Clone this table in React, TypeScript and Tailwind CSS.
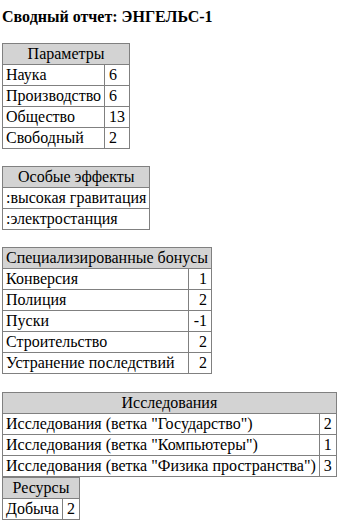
import React from "react";

type Row = [string, string];

const params: Row[] = [
  ["Наука", "6"],
  ["Производство", "6"],
  ["Общество", "13"],
  ["Свободный", "2"],
];

const effects = [":высокая гравитация", ":электростанция"];

const bonuses: Row[] = [
  ["Конверсия", "1"],
  ["Полиция", "2"],
  ["Пуски", "-1"],
  ["Строительство", "2"],
  ["Устранение последствий", "2"],
];

const research: Row[] = [
  ['Исследования (ветка "Государство")', "2"],
  ['Исследования (ветка "Компьютеры")', "1"],
  ['Исследования (ветка "Физика пространства")', "3"],
];

const resources: Row[] = [["Добыча", "2"]];

const cell = "border border-[#808080] py-[1px] whitespace-nowrap";

function StatTable({ title, rows, align = "text-right" }: { title: string; rows: Row[]; align?: string }) {
  return (
    <table className="border-collapse border border-[#808080]">
      <thead>
        <tr>
          <th colSpan={2} className={`${cell} px-[3px] bg-[#d3d3d3] font-normal text-center`}>
            {title}
          </th>
        </tr>
      </thead>
      <tbody>
        {rows.map(([name, value]) => (
          <tr key={name}>
            <td className={`${cell} px-[3px] text-left`}>{name}</td>
            <td className={`${cell} px-[4px] ${align}`}>{value}</td>
          </tr>
        ))}
      </tbody>
    </table>
  );
}

export default function App() {
  return (
    <div className="min-h-screen bg-white px-[2px] pt-[8px] font-['Liberation_Serif','Times_New_Roman',serif] text-[16px] leading-[18px] text-black">
      <div className="mb-[17px] font-bold">Сводный отчет: ЭНГЕЛЬС-1</div>

      <StatTable title="Параметры" rows={params} align="text-left" />

      <table className="mt-[17px] border-collapse border border-[#808080]">
        <thead>
          <tr>
            <th className={`${cell} px-[3px] bg-[#d3d3d3] font-normal text-center`}>Особые эффекты</th>
          </tr>
        </thead>
        <tbody>
          {effects.map((e) => (
            <tr key={e}>
              <td className={`${cell} px-[3px] text-left`}>{e}</td>
            </tr>
          ))}
        </tbody>
      </table>

      <div className="mt-[17px]">
        <StatTable title="Специализированные бонусы" rows={bonuses} />
      </div>

      <div className="mt-[18px]">
        <StatTable title="Исследования" rows={research} />
      </div>

      <StatTable title="Ресурсы" rows={resources} />
    </div>
  );
}
